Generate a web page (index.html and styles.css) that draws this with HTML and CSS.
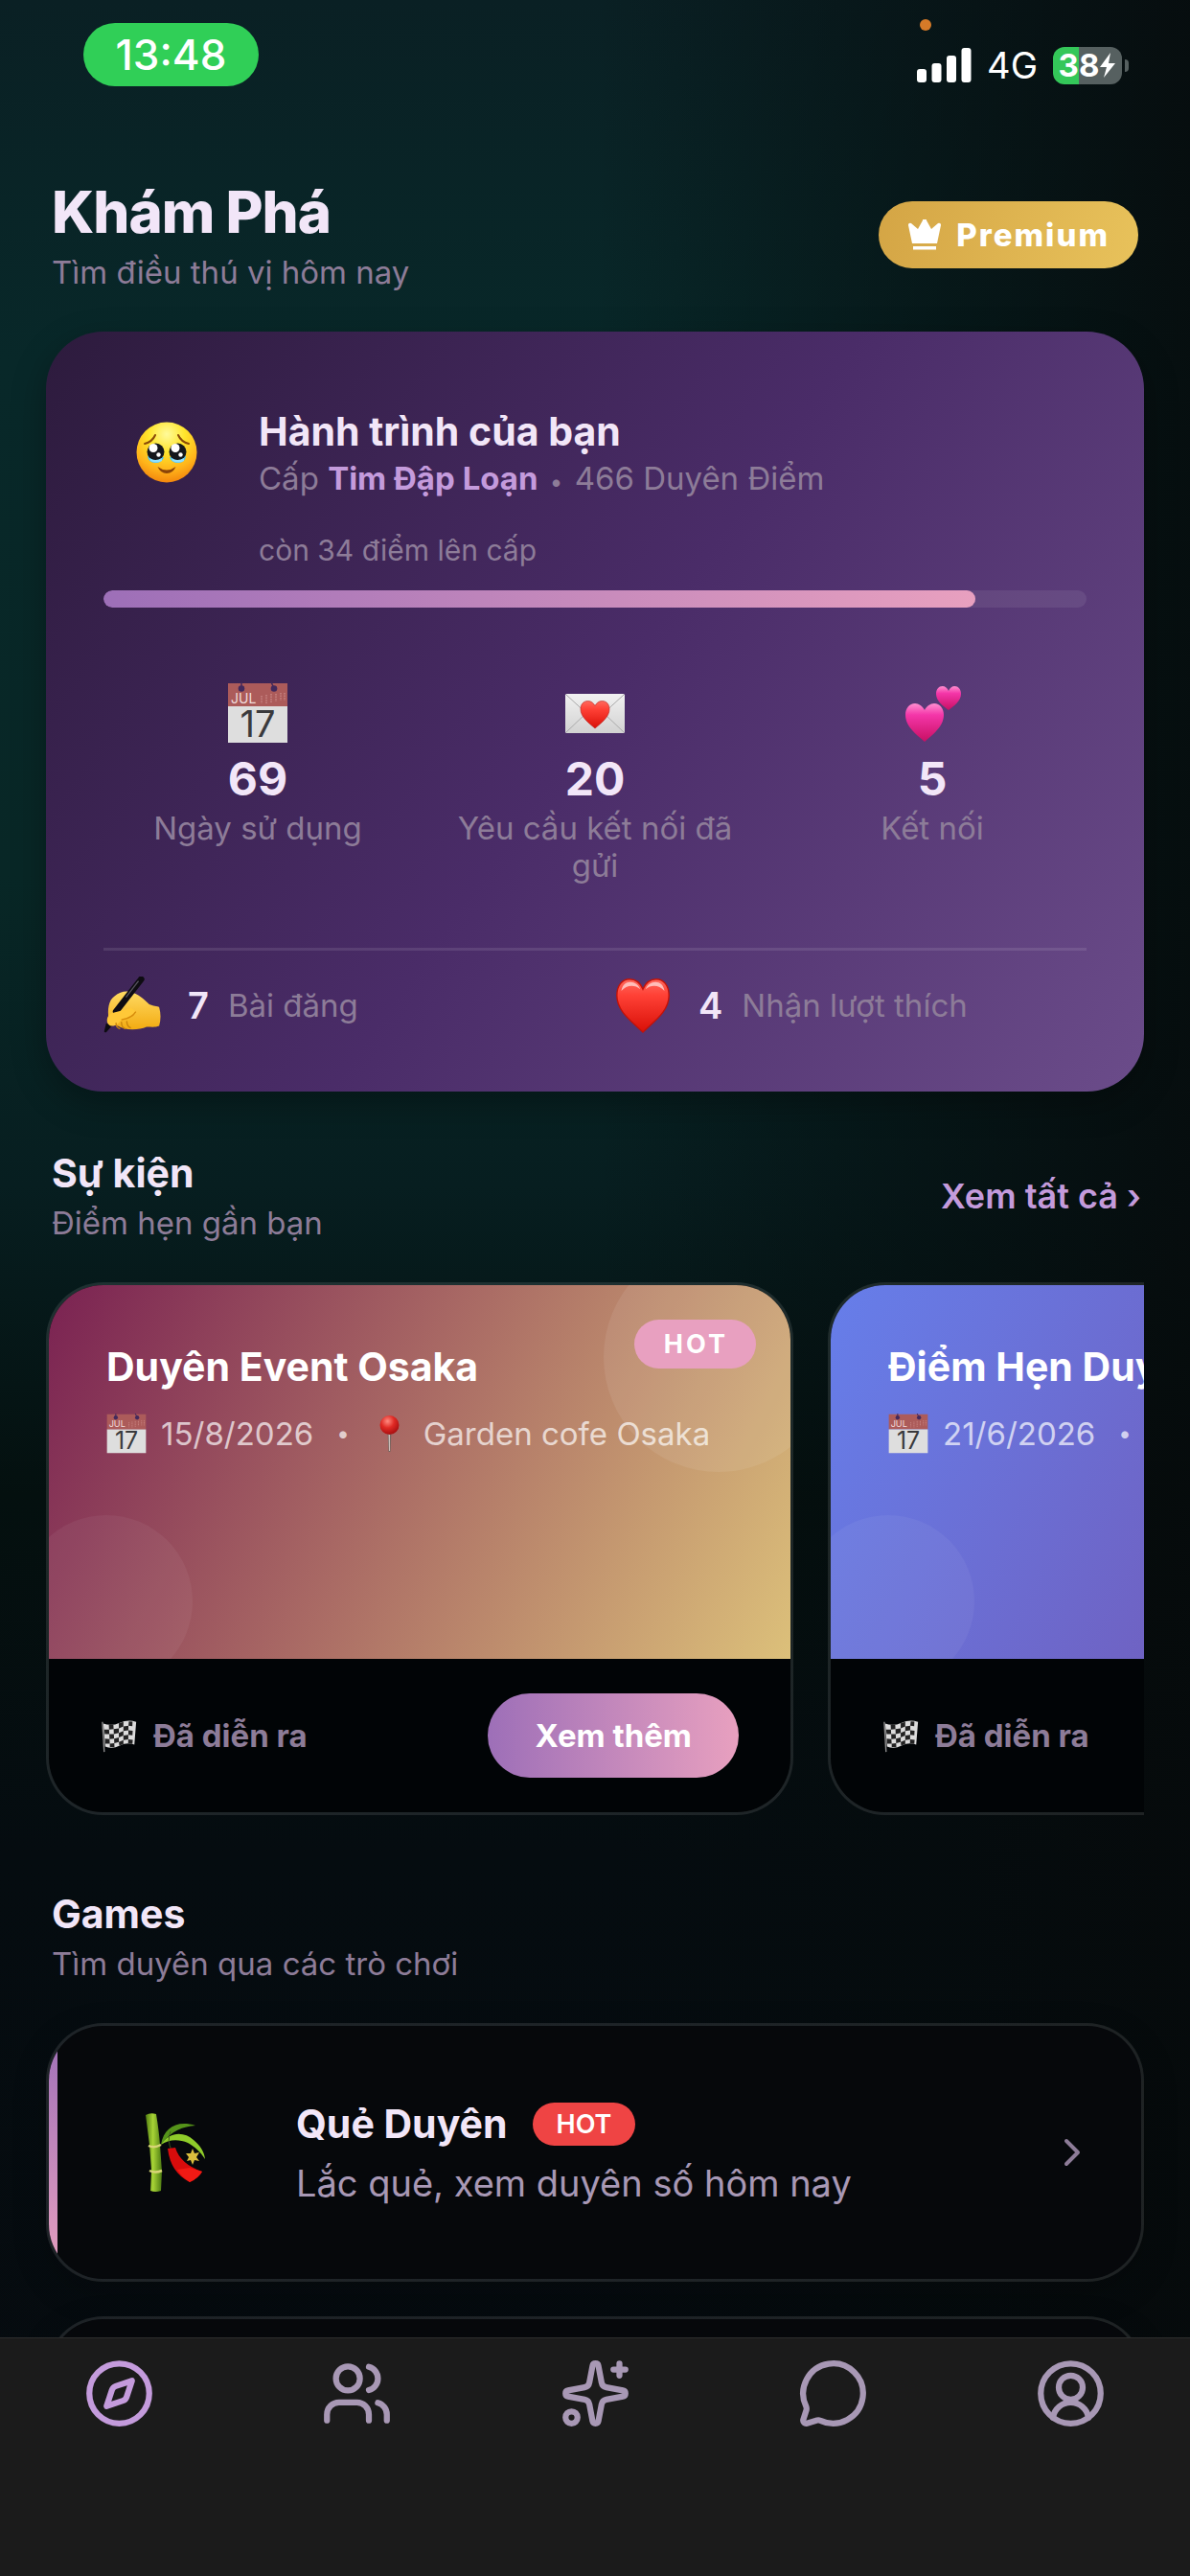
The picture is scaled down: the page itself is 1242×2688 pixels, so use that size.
FILE: index.html
```html
<!DOCTYPE html>
<html lang="vi">
<head>
<meta charset="UTF-8">
<meta name="viewport" content="width=device-width, initial-scale=1">
<title>Khám Phá</title>
<link rel="stylesheet" href="styles.css">
</head>
<body>

<!-- shared emoji artwork -->
<svg class="defs" width="0" height="0" aria-hidden="true">
  <defs>
    <radialGradient id="gFace" cx=".5" cy=".2" r=".85">
      <stop offset="0" stop-color="#fffa9a"/><stop offset=".35" stop-color="#ffe52c"/><stop offset=".7" stop-color="#ffb31a"/><stop offset="1" stop-color="#f07c0a"/>
    </radialGradient>
    <linearGradient id="gPaper" x1="0" y1="0" x2="0" y2="1"><stop offset="0" stop-color="#f1f1f1"/><stop offset="1" stop-color="#d2d2d2"/></linearGradient>
    <linearGradient id="gRed" x1="0" y1="0" x2="0" y2="1"><stop offset="0" stop-color="#ff6a5e"/><stop offset=".3" stop-color="#ff4136"/><stop offset="1" stop-color="#d91008"/></linearGradient>
    <linearGradient id="gPink" x1="0" y1="0" x2="0" y2="1"><stop offset="0" stop-color="#ff8fd0"/><stop offset=".3" stop-color="#f436a9"/><stop offset="1" stop-color="#c80f63"/></linearGradient>
    <linearGradient id="gHand" x1="0" y1="0" x2="0" y2="1"><stop offset="0" stop-color="#ffda62"/><stop offset="1" stop-color="#f3ab12"/></linearGradient>
    <linearGradient id="gStalk" x1="0" y1="0" x2="1" y2="0"><stop offset="0" stop-color="#4f7d10"/><stop offset=".45" stop-color="#a8d436"/><stop offset="1" stop-color="#4c7a12"/></linearGradient>
    <radialGradient id="gPin" cx=".4" cy=".3" r=".7"><stop offset="0" stop-color="#ff8a80"/><stop offset=".5" stop-color="#e02a24"/><stop offset="1" stop-color="#a80f10"/></radialGradient>
  </defs>

  <symbol id="e-face" viewBox="0 0 64 64">
    <circle cx="32" cy="32" r="31.5" fill="url(#gFace)"/>
    <path d="M9 23q8-2 11-9M55 23q-8-2-11-9" fill="none" stroke="#8a4a08" stroke-width="2" stroke-linecap="round"/>
    <path d="M12 36q1 7 8 7t9-6zM35 37q2 6 9 6t8-7z" fill="#4cc3f3"/>
    <ellipse cx="20.500" cy="31.500" rx="9" ry="9" fill="#14171c"/>
    <ellipse cx="43.500" cy="31.500" rx="9" ry="9" fill="#14171c"/>
    <circle cx="18" cy="27.500" r="4.500" fill="#fff"/><circle cx="41" cy="27.500" r="4.500" fill="#fff"/>
    <circle cx="23.500" cy="34.500" r="2.200" fill="#fff"/><circle cx="46.500" cy="34.500" r="2.200" fill="#fff"/>
    <path d="M14 38q6 4 13 0v3q-6 3-12 0zM37 38q6 4 13 0v3q-6 3-12 0z" fill="#8fe0ff"/>
    <path d="M22.500 47q9.500 7 19 0-3 7-9.500 7t-9.500-7z" fill="#8a4408"/>
  </symbol>

  <symbol id="e-calendar" viewBox="0 0 64 64">
    <path d="M1 1h62v24H1z" fill="#ac5b5a"/>
    <path d="M1 25h62v38H1z" fill="#dedede"/>
    <path d="M15 0v7M46 0l3 6" stroke="#42295c" stroke-width="1.500"/>
    <circle cx="15" cy="6.500" r="3.300" fill="#42295c"/><circle cx="49" cy="6.500" r="3.300" fill="#42295c"/>
    <path d="M36 14v8M41 13v9M46 12v10M51 12v8M56 11v8M60 11v8" stroke="#c88583" stroke-width="1.500" stroke-dasharray="1.500 1"/>
  </symbol>

  <symbol id="e-letter" viewBox="0 0 64 64">
    <rect x="1" y="12" width="62" height="41" rx="1.500" fill="url(#gPaper)"/>
    <path d="M2 13l23 21M62 13L39 34M2 52l21-20M62 52L41 32" stroke="#aaa" stroke-width="1" fill="none"/>
    <path d="M32 48C25 42 17 36 17 28c0-5 3-8.500 7.500-8.500 3.500 0 6 2 7.500 5 1.500-3 4-5 7.500-5 4.500 0 7.500 3.500 7.500 8.500 0 8-8 14-15 20z" fill="url(#gRed)" stroke="#b7201b" stroke-width=".6"/>
  </symbol>

  <symbol id="e-hearts" viewBox="0 0 64 64">
    <path d="M24 62C15 54 4 46 4 34c0-7 4-12 10-12 4 0 8 3 10 7 2-4 6-7 10-7 6 0 10 5 10 12 0 12-11 20-20 28z" fill="url(#gPink)"/>
    <path d="M49 29c-5-4-13-9-13-17 0-5 3-8 6.500-8 3 0 5.500 2 6.500 5 1-3 3.500-5 6.500-5 3.500 0 6.500 3 6.500 8 0 8-8 13-13 17z" fill="url(#gPink)"/>
  </symbol>

  <symbol id="e-write" viewBox="0 0 64 64">
    <path d="M6 48C4 36 6 26 12 22c6-5 12-6 17-5 10 2 16 8 22 14 4 2 9 2 11 3 2 7 2 14 0 21-5 2-9 1-14 1-9 4-25 4-32-1-5-1-9-3-10-7z" fill="url(#gHand)"/>
    <path d="M42 3L14 39" stroke="#0e0c12" stroke-width="7" stroke-linecap="round"/>
    <path d="M39 5L25 23" stroke="#55525c" stroke-width="1.500"/>
    <path d="M3 52l7 2-7 8q-3 1-2-2z" fill="#0e0c12"/>
    <path d="M4 49c0-5 3-8 8-9 7-2 14-3 19-5l5 4c-5 7-12 8-16 9-3 4-6 7-10 7-4 0-6-3-6-6z" fill="#ffc838"/>
    <path d="M20 48c5-1 12-2 16-9" fill="none" stroke="#d78c0c" stroke-width="1.500"/>
    <path d="M14 52c0 3 1 5 4 6m2-7c0 4 1 6 4 7m2-8c0 4 2 6 4 7" fill="none" stroke="#c9840c" stroke-width="1.500" stroke-linecap="round"/>
  </symbol>

  <symbol id="e-heart" viewBox="0 0 64 64">
    <path d="M32 62C20 50 3 39 3 21 3 10 9 3 17 3c7 0 12 4 15 11C35 7 40 3 47 3c8 0 14 7 14 18 0 18-17 29-29 41z" fill="url(#gRed)" stroke="#c21208" stroke-width="1.500"/>
    <path d="M8 16c1-7 5-10 10-10 5 0 9 3 11 8-6-5-15-5-21 2zM56 16c-1-7-5-10-10-10-5 0-9 3-11 8 6-5 15-5 21 2z" fill="#fff" opacity=".6"/>
  </symbol>

  <symbol id="e-pin" viewBox="0 0 42 42">
    <path d="M19.500 18h4l-1 22h-2z" fill="#77655f"/>
    <path d="M20.500 20h1.500v19h-1z" fill="#c9bdb8"/>
    <circle cx="21.500" cy="12" r="10" fill="url(#gPin)"/>
  </symbol>

  <symbol id="e-flag" viewBox="0 0 42 42">
    <path d="M2 6l2 33" stroke="#8a8a8a" stroke-width="1.500"/>
    <path d="M3 8q9 3 18-1t18-1l-2 25q-8-3-16 1t-16 1z" fill="#dcdcdc"/>
    <path d="M9 9l5-.2.3 5-5 .6zM20 7.500l5-1.500v5l-5 2zM31 5.500l4 .2-.2 5-4.300-.5zM4 14.500l5.300-.1.300 5-5 .1zM14.300 13.800l5.700-.8v5l-5.500 1.500zM25 11l5.500-.8v5l-5.500.8zM9.600 19.400l4.900 0 .3 5-5 .6zM20 18l5-2v5l-5 2zM30.500 15.200l4.700.5-.3 5-4.500-.5zM4.800 24.500l5 .5.300 5-5-.2zM14.800 24.400l5.200-1.400v5l-5 1.500zM25 21l5.400-.8-.1 5-5.300.8zM10.100 30l4.900-.5.200 4-5 .2zM20 28l5-2v4.500l-4.500 1.500zM30.300 25.200l5 .5-.4 4.500-4.700-.7z" fill="#222"/>
  </symbol>

  <symbol id="e-bamboo" viewBox="0 0 84 84">
    <path d="M11 3q5-3 11-1 3 18 4 32l2 28-1 20q-6 2-11 0l1-21-2-27z" fill="url(#gStalk)"/>
    <path d="M14 35q6 3 13-1M15 61q6 3 13 0" stroke="#d8d477" stroke-width="2.500" fill="none"/>
    <path d="M27 34C30 16 44 8 63 14 50 15 38 19 27 34z" fill="#55931a"/>
    <path d="M27 34c9-14 24-14 34-5 7 6 11 12 12 20-5-8-11-13-18-17-9-4-20-4-28 2z" fill="#8fcc2a"/>
    <path d="M37 20q-4 9 1 20" stroke="#3f5a1e" stroke-width="1" fill="none"/>
    <path d="M34 38l8-1q5 17 28 25-4 7-13 11-20-10-23-35z" fill="#d80c0c"/>
    <path d="M44 60l13-2 13 4q-4 7-13 11-8-5-13-13z" fill="#f21a14"/>
    <path d="M60 38l2 5 5-1-3 5 3 4-5-1-2 5-2-5-4 1 2-4-3-4 5 0z" fill="#d9bd3e"/>
  </symbol>
</svg>

<div class="app">
  <div class="status">
    <span class="clock">13:48</span>
    <div class="status-right">
      <span class="mic-dot"></span>
      <svg class="signal" viewBox="0 0 57 36" fill="#fff" aria-label="signal">
        <rect x="0" y="22" width="10" height="14" rx="3"/><rect x="15.500" y="16" width="10" height="20" rx="3"/><rect x="31" y="8" width="10" height="28" rx="3"/><rect x="46.500" y="0" width="10" height="36" rx="3"/>
      </svg>
      <span class="net">4G</span>
      <span class="battery">38<svg viewBox="0 0 18 26" fill="#fff" aria-hidden="true"><path d="M12 0L1 15h7L5 26 17 11h-7z"/></svg></span>
    </div>
  </div>

  <main class="content">
    <header class="page-head">
      <div>
        <h1>Khám Phá</h1>
        <p class="sub">Tìm điều thú vị hôm nay</p>
      </div>
      <button class="premium" type="button">
        <svg viewBox="0 0 36 32" fill="#fff" aria-hidden="true"><path d="M1 6a2 2 0 0 1 3-2l7 6 5-9a2 2 0 0 1 4 0l5 9 7-6a2 2 0 0 1 3 2l-4 19H5zM6 28h24v3.500H6z"/></svg>
        Premium
      </button>
    </header>

    <section class="journey">
      <div class="journey-head">
        <div class="avatar"><svg class="emoji"><use href="#e-face"/></svg></div>
        <div>
          <h2>Hành trình của bạn</h2>
          <p class="level">Cấp <strong>Tim Đập Loạn</strong> <i>•</i> 466 Duyên Điểm</p>
        </div>
      </div>
      <p class="remain">còn 34 điểm lên cấp</p>
      <div class="track"><div class="fill" style="width:88.7%"></div></div>

      <div class="stats">
        <div class="stat">
          <svg class="emoji cal" viewBox="0 0 64 64"><use href="#e-calendar"/><text class="cal-month" x="4" y="22">JUL</text><text class="cal-day" x="32" y="57">17</text></svg>
          <b>69</b>
          <span>Ngày sử dụng</span>
        </div>
        <div class="stat">
          <svg class="emoji"><use href="#e-letter"/></svg>
          <b>20</b>
          <span>Yêu cầu kết nối đã gửi</span>
        </div>
        <div class="stat">
          <svg class="emoji"><use href="#e-hearts"/></svg>
          <b>5</b>
          <span>Kết nối</span>
        </div>
      </div>

      <div class="counts">
        <div class="count"><svg><use href="#e-write"/></svg><b>7</b><span>Bài đăng</span></div>
        <div class="count"><svg><use href="#e-heart"/></svg><b>4</b><span>Nhận lượt thích</span></div>
      </div>
    </section>

    <section>
      <div class="section-head">
        <div>
          <h2>Sự kiện</h2>
          <p class="sub">Điểm hẹn gần bạn</p>
        </div>
        <a class="see-all" href="#events">Xem tất cả ›</a>
      </div>
      <div class="events" id="events">
        <article class="event">
          <div class="cover cover-sunset">
            <span class="tag-hot">HOT</span>
            <h3>Duyên Event Osaka</h3>
            <p class="meta"><svg class="mini cal" viewBox="0 0 64 64"><use href="#e-calendar"/><text class="cal-month" x="4" y="22">JUL</text><text class="cal-day" x="32" y="57">17</text></svg><span>15/8/2026</span><i>•</i><svg class="mini"><use href="#e-pin"/></svg><span>Garden cofe Osaka</span></p>
          </div>
          <div class="event-foot">
            <span class="done"><svg><use href="#e-flag"/></svg>Đã diễn ra</span>
            <button class="more" type="button">Xem thêm</button>
          </div>
        </article>
        <article class="event">
          <div class="cover cover-blue">
            <h3>Điểm Hẹn Duyên</h3>
            <p class="meta"><svg class="mini cal" viewBox="0 0 64 64"><use href="#e-calendar"/><text class="cal-month" x="4" y="22">JUL</text><text class="cal-day" x="32" y="57">17</text></svg><span>21/6/2026</span><i>•</i></p>
          </div>
          <div class="event-foot">
            <span class="done"><svg><use href="#e-flag"/></svg>Đã diễn ra</span>
          </div>
        </article>
      </div>
    </section>

    <section class="games">
      <div class="section-head">
        <div>
          <h2>Games</h2>
          <p class="sub">Tìm duyên qua các trò chơi</p>
        </div>
      </div>
      <a class="game" href="#que-duyen">
        <span class="game-icon"><svg><use href="#e-bamboo"/></svg></span>
        <span class="game-text">
          <span class="game-title">Quẻ Duyên <em>HOT</em></span>
          <span class="game-desc">Lắc quẻ, xem duyên số hôm nay</span>
        </span>
        <svg class="chevron" viewBox="0 0 36 36" aria-hidden="true"><path d="M12 6l12 12-12 12"/></svg>
      </a>
      <a class="game" href="#next" aria-label="Game"></a>
    </section>
  </main>

  <nav class="tabs">
    <a class="active" href="#explore" aria-label="Khám phá"><svg viewBox="0 0 24 24"><circle cx="12" cy="12" r="10"/><path d="M16.240 7.760l-1.804 5.411a2 2 0 0 1-1.265 1.265L7.760 16.240l1.804-5.411a2 2 0 0 1 1.265-1.265z"/></svg></a>
    <a href="#friends" aria-label="Kết nối"><svg viewBox="0 0 24 24"><path d="M16 21v-2a4 4 0 0 0-4-4H6a4 4 0 0 0-4 4v2"/><circle cx="9" cy="7" r="4"/><path d="M22 21v-2a4 4 0 0 0-3-3.870M16 3.130a4 4 0 0 1 0 7.750"/></svg></a>
    <a href="#match" aria-label="Duyên"><svg viewBox="0 0 24 24"><path d="M11.017 2.814a1 1 0 0 1 1.966 0l1.051 5.558a2 2 0 0 0 1.594 1.594l5.558 1.051a1 1 0 0 1 0 1.966l-5.558 1.051a2 2 0 0 0-1.594 1.594l-1.051 5.558a1 1 0 0 1-1.966 0l-1.051-5.558a2 2 0 0 0-1.594-1.594l-5.558-1.051a1 1 0 0 1 0-1.966l5.558-1.051a2 2 0 0 0 1.594-1.594zM20 2v4M22 4h-4"/><circle cx="4" cy="20" r="2"/></svg></a>
    <a href="#chat" aria-label="Tin nhắn"><svg viewBox="0 0 24 24"><path d="M2.992 16.342a2 2 0 0 1 .094 1.167l-1.065 3.290a1 1 0 0 0 1.236 1.168l3.413-.998a2 2 0 0 1 1.099.092 10 10 0 1 0-4.777-4.719"/></svg></a>
    <a href="#me" aria-label="Hồ sơ"><svg viewBox="0 0 24 24"><path d="M17.925 20.056a6 6 0 0 0-11.851.001"/><circle cx="12" cy="10" r="4"/><circle cx="12" cy="12" r="10"/></svg></a>
  </nav>
</div>
</body>
</html>
```

FILE: styles.css
```css
:root{
  --text: #f2e6f8;
  --muted: #8d7c98;
  --soft: #a898b5;
  --accent: #c49bdc;
  --purple: #9d6fb8;
  --pink: #e8a0bf;
  --line: rgba(255,255,255,0.1);
  --sans: Inter, Roboto, "Noto Sans", sans-serif;
}
*{ box-sizing: border-box; }
html,body{ margin: 0; padding: 0; background: #05090c; color: var(--text); font-family: var(--sans); }
h1,h2,h3,p{ margin: 0; }
a{ color: inherit; text-decoration: none; }
button{ border: 0; font-family: inherit; cursor: pointer; }
svg{ display: block; flex-shrink: 0; }
.defs{ position: absolute; }

.app{
  height: 100vh; display: flex; flex-direction: column;
  background:
    linear-gradient(90deg, transparent 50%, rgba(5,11,12,0.55) 80%, rgba(6,10,11,0.85) 100%),
    linear-gradient(180deg, #0a2024 0%, #082829 14%, #082726 34%, #071e20 46%, #04100f 58%, #050c10 72%, #060b0f 100%);
}

/* status bar */
.status{ display: flex; justify-content: space-between; align-items: flex-start; padding: 24px 64px 0 87px; flex-shrink: 0; }
.clock{
  width: 183px; background: #30cf57; color: #fff; border-radius: 33px;
  font-size: 44px; line-height: 66px; font-weight: 500; text-align: center;
}
.status-right{ position: relative; display: flex; align-items: center; gap: 16px; padding-top: 24px; color: #fff; }
.mic-dot{ position: absolute; left: 3px; top: -4px; width: 12px; height: 12px; border-radius: 50%; background: #d67a28; }
.signal{ width: 57px; height: 36px; }
.net{ font-size: 38px; line-height: 40px; }
.battery{
  position: relative; display: flex; align-items: center; justify-content: center;
  width: 72px; height: 39px; border-radius: 12px; margin-right: 7px;
  background: linear-gradient(90deg, #34c759 38%, #566060 38%);
  font-size: 33px; line-height: 39px; font-weight: 700;
}
.battery svg{ width: 18px; height: 26px; }
.battery::after{ content: ""; position: absolute; right: -7px; top: 13px; width: 4px; height: 13px; border-radius: 0 4px 4px 0; background: #566060; }

.content{ flex: 1; min-height: 0; overflow: hidden; padding: 95px 48px 0; }

.page-head, .section-head{ display: flex; align-items: center; justify-content: space-between; margin-bottom: 42px; padding: 0 6px; }
h1{ font-size: 60px; line-height: 72px; font-weight: 800; letter-spacing: -1px; }
h2, h3, .game-title{ font-size: 41px; line-height: 50px; font-weight: 700; }
.sub{ margin-top: 7px; font-size: 33px; line-height: 40px; color: var(--muted); }
.premium{
  display: flex; align-items: center; gap: 15px; height: 70px; padding: 0 30px; border-radius: 35px;
  background: linear-gradient(104deg, #d4a545, #e8c25b);
  color: #fff; font-size: 33px; font-weight: 800; letter-spacing: 2px;
}
.premium svg{ width: 36px; height: 32px; }

/* journey card */
.journey{
  padding: 60px; border-radius: 60px; margin-bottom: 60px;
  background: linear-gradient(125deg, #2d1b3d 0%, #4a2c68 50%, #6b4c8a 100%);
  box-shadow: 0 12px 36px rgba(0,0,0,0.3);
}
.journey-head{ display: flex; align-items: center; gap: 30px; }
.avatar{ width: 132px; height: 132px; display: flex; align-items: center; justify-content: center; }
.emoji{ width: 64px; height: 64px; }
.cal-month{ font-size: 14px; fill: #f0dcdc; }
.cal-day{ font-size: 38px; text-anchor: middle; fill: #3a3a3c; }
.level{ margin-top: 4px; font-size: 33px; line-height: 40px; color: var(--muted); }
.level strong{ color: var(--accent); font-weight: 700; }
.level i{ font-style: normal; font-size: 24px; line-height: 24px; margin: 0 3px; }
.remain{ margin: 18px 0 24px 162px; font-size: 30px; line-height: 36px; color: var(--muted); }
.track{ height: 18px; border-radius: 9px; background: rgba(255,255,255,0.08); overflow: hidden; }
.fill{ height: 100%; border-radius: 9px; background: linear-gradient(90deg, var(--purple), var(--pink)); }

.stats{ display: grid; grid-template-columns: repeat(3, 1fr); gap: 30px; margin-top: 78px; padding-bottom: 66px; border-bottom: 3px solid var(--line); }
.stat{ display: flex; flex-direction: column; align-items: center; text-align: center; }
.stat b{ margin: 8px 0 3px; font-size: 48px; line-height: 58px; font-weight: 700; }
.stat span{ font-size: 33px; line-height: 39px; color: var(--muted); }

.counts{ display: grid; grid-template-columns: 1fr 1fr; gap: 40px; padding-top: 27px; }
.count{ display: flex; align-items: center; }
.count svg{ width: 60px; height: 60px; }
.count b{ margin: 0 20px 0 28px; font-size: 38px; line-height: 46px; font-weight: 600; }
.count span{ font-size: 33px; line-height: 40px; color: var(--muted); }

/* events */
.section-head{ padding-right: 3px; }
.see-all{ color: var(--accent); font-size: 36px; line-height: 44px; font-weight: 600; }
.events{ display: flex; gap: 36px; overflow: hidden; }
.event{ flex: 0 0 780px; border: 3px solid var(--line); border-radius: 60px; overflow: hidden; background: #010406; background-clip: padding-box; }
.cover{ position: relative; height: 390px; padding: 60px; overflow: hidden; }
.cover-sunset{ background: linear-gradient(117deg, #7a2252 0%, #a86864 45%, #dcc07a 100%); }
.cover-blue{ background: linear-gradient(117deg, #667eea, #764ba2); }
.cover::before, .cover::after{ content: ""; position: absolute; border-radius: 50%; }
.cover::before{ width: 240px; height: 240px; right: -45px; top: -45px; background: rgba(255,255,255,0.08); }
.cover::after{ width: 180px; height: 180px; left: -30px; bottom: -30px; background: rgba(255,255,255,0.05); }
.cover h3{ color: #fff; white-space: nowrap; }
.meta{ display: flex; align-items: center; margin-top: 24px; font-size: 33px; line-height: 42px; color: rgba(255,255,255,0.7); white-space: nowrap; }
.meta span{ margin-left: 15px; }
.meta i{ margin: 0 20px 0 24px; font-style: normal; font-size: 24px; }
.mini{ width: 42px; height: 42px; }
.tag-hot{
  position: absolute; right: 36px; top: 36px; padding: 0 29px 0 31px; border-radius: 26px;
  background: #e8a0c0; color: #fff; font-size: 27px; line-height: 51px; font-weight: 700; letter-spacing: 3px;
}
.event-foot{ display: flex; align-items: center; justify-content: space-between; height: 160px; padding: 0 54px; }
.done{ display: flex; align-items: center; gap: 15px; font-size: 33px; line-height: 40px; font-weight: 700; color: var(--muted); }
.done svg{ width: 40px; height: 40px; }
.more{
  height: 88px; padding: 0 49px; border-radius: 44px; color: #fff;
  background: linear-gradient(90deg, var(--purple), var(--pink)); font-size: 33px; font-weight: 700;
}

/* games */
.games{ margin-top: 78px; }
.game{
  position: relative; display: flex; align-items: center; min-height: 270px; margin-bottom: 36px;
  padding: 0 54px 0 66px; border: 3px solid var(--line); border-radius: 60px; overflow: hidden;
  background: #06080b; background-clip: padding-box; box-shadow: 0 12px 36px rgba(0,0,0,0.2);
}
.game::before{ content: ""; position: absolute; left: 0; top: 0; bottom: 0; width: 9px; background: linear-gradient(180deg, var(--purple), var(--pink)); }
.game:last-child::before{ display: none; }
.game-icon{ width: 132px; height: 132px; margin-right: 60px; display: flex; align-items: center; justify-content: center; }
.game-icon svg{ width: 84px; height: 84px; }
.game-text{ flex: 1; display: flex; flex-direction: column; gap: 14px; }
.game-title{ display: flex; align-items: center; gap: 26px; }
.game-title em{
  padding: 0 25px; border-radius: 23px; background: #ef4444; color: #fff;
  font-size: 27px; line-height: 45px; font-weight: 600; font-style: normal;
}
.game-desc{ font-size: 38px; line-height: 46px; color: var(--soft); }
.chevron{ width: 36px; height: 36px; fill: none; stroke: var(--muted); stroke-width: 4; stroke-linecap: round; stroke-linejoin: round; }

/* bottom tabs */
.tabs{ display: flex; height: 249px; flex-shrink: 0; padding-top: 20px; background: #1b1b1b; border-top: 1px solid #2e2e2e; }
.tabs a{ flex: 1; display: flex; justify-content: center; align-items: flex-start; color: var(--soft); }
.tabs .active{ color: var(--accent); }
.tabs svg{ width: 75px; height: 75px; fill: none; stroke: currentColor; stroke-width: 2; stroke-linecap: round; stroke-linejoin: round; }
```
